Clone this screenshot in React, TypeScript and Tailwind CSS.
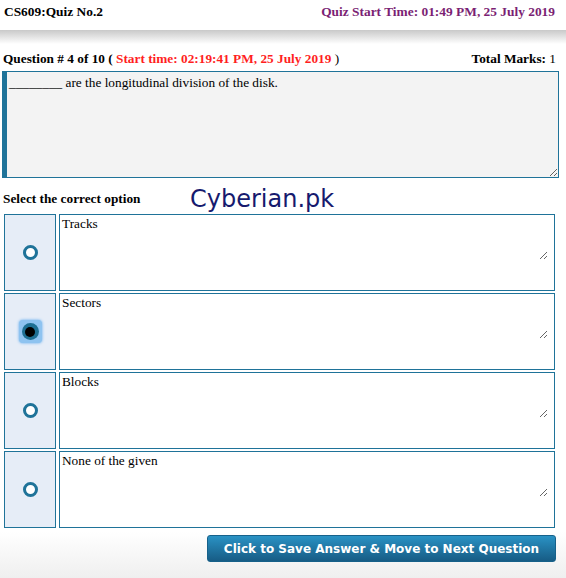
import React from "react";

const options = [
  { label: "Tracks", selected: false },
  { label: "Sectors", selected: true },
  { label: "Blocks", selected: false },
  { label: "None of the given", selected: false },
];

function Radio({ selected }: { selected: boolean }) {
  if (selected) {
    return (
      <div className="flex h-[23px] w-[23px] items-center justify-center rounded-[4px] bg-[#8ec3f0] shadow-[0_0_3px_#5aa8ee]">
        <div className="flex h-[17px] w-[17px] items-center justify-center rounded-full bg-[#1d6f93]">
          <div className="h-[10px] w-[10px] rounded-full bg-black" />
        </div>
      </div>
    );
  }
  return <div className="h-[15px] w-[15px] rounded-full border-[3px] border-[#1f7399] bg-white" />;
}

export default function App() {
  return (
    <div className="min-h-[578px] w-[566px] bg-gradient-to-b from-white from-[92%] to-[#efefef] font-['Liberation_Serif',serif] text-[13.3px] text-black">
      <div className="flex h-[30px] items-start justify-between px-[4px] pt-[4px] text-[13.4px] font-bold leading-[16px]">
        <span>CS609:Quiz No.2</span>
        <span className="mr-[7px] text-[#7b1f74]">Quiz Start Time: 01:49 PM, 25 July 2019</span>
      </div>
      <div className="h-[14px] bg-gradient-to-b from-[#c9c9c9] to-white" />

      <div className="mt-[7px] flex items-center justify-between pl-[3px] pr-[10px] leading-[16px]">
        <span className="font-bold">
          Question # 4 of 10 ({" "}
          <span className="text-[#ff1f1f]">Start time: 02:19:41 PM, 25 July 2019</span>{" "}
          <span className="font-normal">)</span>
        </span>
        <span>
          <b>Total Marks:</b> 1
        </span>
      </div>

      <div className="ml-[2px] mt-[4px] w-[557px]">
        <textarea
          readOnly
          defaultValue="________ are the longitudinal division of the disk."
          className="block h-[107px] w-full border border-l-[5px] border-[#1f7399] bg-[#f3f3f3] px-[2px] pt-[3px] font-['Liberation_Serif',serif] text-[13.3px] leading-[16px] text-black outline-none"
        />
      </div>

      <div className="mt-[7px] flex items-end pl-[3px]">
        <span className="mb-[4px] w-[187px] font-bold">Select the correct option</span>
        <span className="font-['DejaVu_Sans',sans-serif] text-[24px] leading-[28px] text-[#161a6e]">Cyberian.pk</span>
      </div>

      <div className="mt-[1px] flex flex-col gap-[2px] pl-[4px] pr-[11px]">
        {options.map((o) => (
          <div key={o.label} className="flex h-[77px] gap-[3px]">
            <div className="flex w-[52px] shrink-0 items-center justify-center border border-[#1f7399] bg-[#e6edf7]">
              <Radio selected={o.selected} />
            </div>
            <div className="flex-1 border border-[#1f7399] bg-white">
              <textarea
                readOnly
                defaultValue={o.label}
                className="block h-[45px] w-[488px] resize bg-white px-[2px] pt-[1px] font-['Liberation_Serif',serif] text-[13.3px] leading-[16px] text-black outline-none"
              />
            </div>
          </div>
        ))}
      </div>

      <div className="mt-[7px] flex justify-end pr-[10px]">
        <button className="h-[27px] w-[349px] rounded-[3px] border border-[#17618a] bg-gradient-to-b from-[#2a92c4] to-[#175c85] font-['DejaVu_Sans',sans-serif] text-[12px] font-bold text-white">
          Click to Save Answer &amp; Move to Next Question
        </button>
      </div>
    </div>
  );
}
